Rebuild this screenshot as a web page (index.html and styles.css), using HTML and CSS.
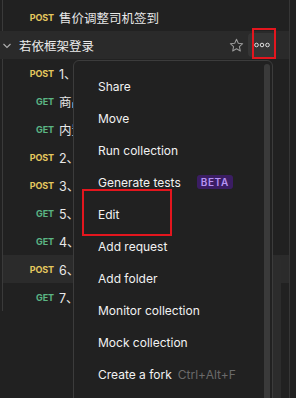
FILE: index.html
```html
<!DOCTYPE html>
<html>
<head>
<meta charset="utf-8">
<link rel="stylesheet" href="styles.css">
</head>
<body>
<div class="sidebar">
  <div class="group top-group">
    <div class="row"><span class="method post">POST</span><span class="name">售价调整司机签到</span></div>
  </div>
  <div class="row collection">
    <svg class="chev" width="8" height="6" viewBox="0 0 8 6"><path d="M0.5 1 L4 4.5 L7.5 1" fill="none" stroke="#b0b0b0" stroke-width="1.1"/></svg>
    <span class="cname">若依框架登录</span>
    <svg class="star" width="15" height="15" viewBox="0 0 16 16"><path d="M8 1.3 L9.9 5.6 L14.6 6.1 L11.1 9.2 L12.1 13.9 L8 11.5 L3.9 13.9 L4.9 9.2 L1.4 6.1 L6.1 5.6 Z" fill="none" stroke="#9a9a9a" stroke-width="1.1" stroke-linejoin="round"/></svg>
    <span class="more">
      <svg width="16" height="6" viewBox="0 0 16 6"><circle cx="2.5" cy="3" r="1.8" fill="none" stroke="#e0e0e0" stroke-width="1"/><circle cx="8" cy="3" r="1.8" fill="none" stroke="#e0e0e0" stroke-width="1"/><circle cx="13.5" cy="3" r="1.8" fill="none" stroke="#e0e0e0" stroke-width="1"/></svg>
    </span>
  </div>
  <div class="group children">
    <div class="row"><span class="method post">POST</span><span class="name">1、用户登录</span></div>
    <div class="row"><span class="method get">GET</span><span class="name">商品列表查询</span></div>
    <div class="row"><span class="method get">GET</span><span class="name">内置接口查询</span></div>
    <div class="row"><span class="method post">POST</span><span class="name">2、新增订单</span></div>
    <div class="row"><span class="method post">POST</span><span class="name">3、修改订单</span></div>
    <div class="row"><span class="method get">GET</span><span class="name">5、订单详情</span></div>
    <div class="row"><span class="method get">GET</span><span class="name">4、订单列表</span></div>
    <div class="row active"><span class="method post">POST</span><span class="name">6、提交审核</span></div>
    <div class="row"><span class="method get">GET</span><span class="name">7、退出登录</span></div>
  </div>
  <div class="sb-thumb"></div>

  <div class="menu">
    <div class="item">Share</div>
    <div class="item">Move</div>
    <div class="item">Run collection</div>
    <div class="item">Generate tests <span class="beta">BETA</span></div>
    <div class="item">Edit</div>
    <div class="item">Add request</div>
    <div class="item">Add folder</div>
    <div class="item">Monitor collection</div>
    <div class="item">Mock collection</div>
    <div class="item">Create a fork <span class="shortcut">Ctrl+Alt+F</span></div>
    <div class="menu-scroll"></div>
  </div>

  <div class="mark mark-more"></div>
  <div class="mark mark-edit"></div>
</div>
</body>
</html>
```

FILE: styles.css
```css
html, body {
  margin: 0;
  padding: 0;
  background: #212121;
  overflow: hidden;
  width: 296px;
  height: 398px;
}
body {
  font-family: Inter, "Noto Sans CJK SC", sans-serif;
  color: #ececec;
}
.sidebar {
  position: relative;
  width: 290px;
  height: 398px;
  border-right: 1px solid #363636;
  padding-top: 3px;
  box-sizing: border-box;
  overflow: hidden;
}
.group {
  margin-left: 2px;
  border-left: 1px solid #3a3a3a;
}
.top-group {
  margin-top: -3px;
  padding-top: 3px;
}
.row {
  height: 28px;
  display: flex;
  align-items: center;
  font-size: 12px;
  white-space: nowrap;
}
.row.active {
  background: #2b2b2b;
}
.method {
  width: 51px;
  text-align: right;
  font-size: 9px;
  font-weight: 700;
  letter-spacing: -0.1px;
  flex: none;
}
.post { color: #e5c85f; }
.get { color: #5bb584; }
.name {
  margin-left: 5px;
  color: #e8e8e8;
  font-size: 12.5px;
}
.children .name {
  max-width: 14px;
  overflow: hidden;
}
.collection {
  background: #2a2a2a;
  padding-left: 3px;
}
.chev {
  flex: none;
  margin-top: 1px;
}
.cname {
  margin-left: 8px;
  font-size: 12.5px;
  color: #ececec;
  flex: 1;
}
.star {
  flex: none;
  margin-right: 4px;
}
.more {
  flex: none;
  width: 28px;
  height: 24px;
  margin-right: 13px;
  background: #353535;
  border-radius: 4px;
  display: flex;
  align-items: center;
  justify-content: center;
}
.sb-thumb {
  position: absolute;
  left: 273px;
  top: 255px;
  width: 8px;
  height: 150px;
  background: #2c2c2c;
  border-radius: 4px;
}
.menu {
  position: absolute;
  left: 73px;
  top: 60px;
  width: 200px;
  height: 360px;
  box-sizing: border-box;
  background: #212121;
  border: 1px solid #3c3c3c;
  border-radius: 6px;
  padding-top: 9px;
}
.item {
  height: 32px;
  display: flex;
  align-items: center;
  padding-left: 24px;
  font-size: 12px;
  color: #f2f2f2;
  white-space: nowrap;
}
.beta {
  margin-left: 16px;
  background: #3b1d63;
  color: #b693f2;
  font-size: 10px;
  font-weight: 600;
  letter-spacing: 0.6px;
  padding: 1px 4px;
  border-radius: 3px;
  line-height: 12px;
}
.shortcut {
  margin-left: 6px;
  color: #6a6a6a;
  font-size: 12px;
}
.menu-scroll {
  position: absolute;
  right: 2px;
  top: 3px;
  width: 6px;
  height: 400px;
  background: #3a3a3a;
  border-radius: 3px;
}
.mark {
  position: absolute;
  border: 2px solid #e3161e;
  box-sizing: border-box;
}
.mark-more {
  left: 252px;
  top: 28px;
  width: 24px;
  height: 31px;
}
.mark-edit {
  left: 82px;
  top: 189px;
  width: 90px;
  height: 47px;
}
```
